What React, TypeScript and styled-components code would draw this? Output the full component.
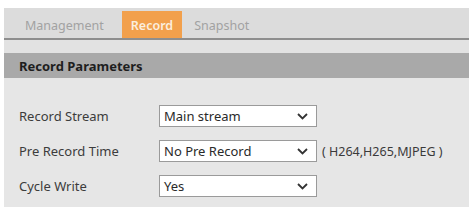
import React from "react";
import styled, { createGlobalStyle } from "styled-components";

const GlobalStyle = createGlobalStyle`
  body {
    margin: 0;
    background: #ffffff;
    font-family: "Noto Sans", "Open Sans", sans-serif;
  }
`;

interface FieldProps {
  label: string;
  value: string;
  note?: string;
}

const tabs = ["Management", "Record", "Snapshot"];

const fields: FieldProps[] = [
  { label: "Record Stream", value: "Main stream" },
  { label: "Pre Record Time", value: "No Pre Record", note: "( H264,H265,MJPEG )" },
  { label: "Cycle Write", value: "Yes" },
];

const Chevron = () => (
  <svg width="11" height="7" viewBox="0 0 11 7">
    <path d="M1 1 L5.5 5.5 L10 1" fill="none" stroke="#333" strokeWidth="1.8" />
  </svg>
);

const Field: React.FC<FieldProps> = ({ label, value, note }) => (
  <Row>
    <Label>{label}</Label>
    <Select>
      <span>{value}</span>
      <Chevron />
    </Select>
    {note && <Note>{note}</Note>}
  </Row>
);

export default function App() {
  return (
    <>
      <GlobalStyle />
      <Panel>
        <TabBar>
          {tabs.map((t) => (
            <Tab key={t} active={t === "Record"}>
              {t}
            </Tab>
          ))}
        </TabBar>
        <Spacer />
        <Header>Record Parameters</Header>
        <Body>
          {fields.map((f) => (
            <Field key={f.label} {...f} />
          ))}
        </Body>
      </Panel>
    </>
  );
}

const Panel = styled.div`
  margin: 8px 4px 0;
  width: 465px;
`;

const TabBar = styled.div`
  display: flex;
  align-items: flex-end;
  gap: 4px;
  height: 30px;
  padding-left: 13px;
  background: #dcdcdc;
  border-bottom: 2px solid #8e8e8e;
`;

const Tab = styled.div<{ active?: boolean }>`
  height: 27px;
  line-height: 29px;
  padding: 0 8px;
  font-size: 12.5px;
  color: ${({ active }) => (active ? "#fbeede" : "#a2a2a2")};
  background: ${({ active }) => (active ? "#f2a04c" : "transparent")};
  ${({ active }) => active && "padding: 0 9px; font-weight: 600; margin: 0 0 0 6px;"}
`;

const Spacer = styled.div`
  height: 13px;
  background: #e2e2e2;
`;

const Header = styled.div`
  height: 25px;
  line-height: 26px;
  padding-left: 15px;
  background: #a9a9a9;
  color: #1e1e1e;
  font-size: 13px;
  font-weight: 700;
`;

const Body = styled.div`
  display: flex;
  flex-direction: column;
  gap: 13px;
  padding: 27px 0 10px 15px;
  background: #e6e6e6;
`;

const Row = styled.div`
  display: flex;
  align-items: center;
  height: 22px;
`;

const Label = styled.div`
  width: 140px;
  font-size: 13px;
  color: #3c3c3c;
`;

const Select = styled.div`
  box-sizing: border-box;
  width: 158px;
  height: 22px;
  display: flex;
  align-items: center;
  justify-content: space-between;
  padding: 0 8px 0 4px;
  background: #ffffff;
  border: 1px solid #9a9a9a;
  font-size: 13px;
  color: #2a2a2a;
`;

const Note = styled.div`
  margin-left: 5px;
  font-size: 12.5px;
  color: #3a3a3a;
`;
